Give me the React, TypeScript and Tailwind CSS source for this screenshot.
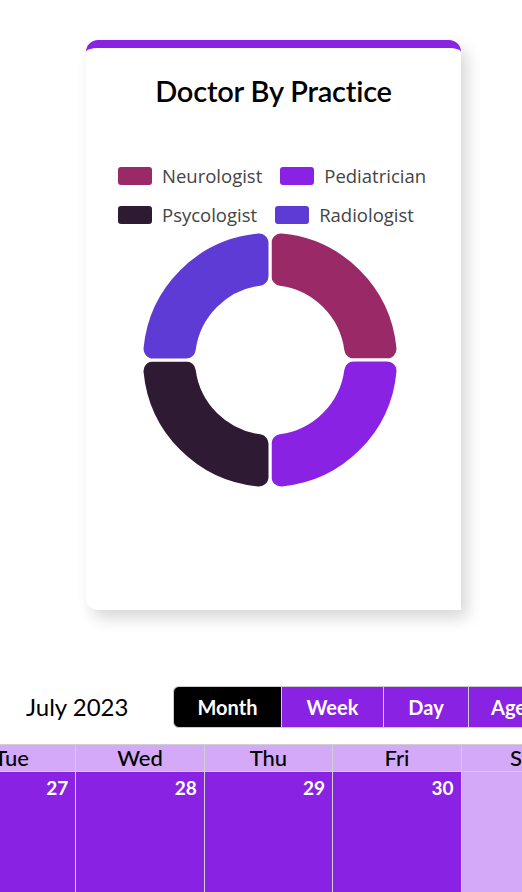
import React from "react";

const slices = [
  { label: "Neurologist", color: "#992a67", start: -90 },
  { label: "Pediatrician", color: "#8a22e4", start: 0 },
  { label: "Psycologist", color: "#2f1a34", start: 90 },
  { label: "Radiologist", color: "#5e3bd5", start: 180 },
];

const legendRows = [
  [slices[0], slices[1]],
  [slices[2], slices[3]],
];

function pt(cx: number, cy: number, rad: number, deg: number) {
  const a = (deg * Math.PI) / 180;
  return `${(cx + rad * Math.cos(a)).toFixed(2)} ${(cy + rad * Math.sin(a)).toFixed(2)}`;
}

// annular sector with rounded corners, like chart.js borderRadius
function roundedArc(cx: number, cy: number, R: number, r: number, a0: number, a1: number, k: number) {
  const to = (Math.asin(k / (R - k)) * 180) / Math.PI;
  const ti = (Math.asin(k / (r + k)) * 180) / Math.PI;
  const dOut = (R - k) * Math.cos((to * Math.PI) / 180);
  const dIn = (r + k) * Math.cos((ti * Math.PI) / 180);
  return [
    `M ${pt(cx, cy, R, a0 + to)}`,
    `A ${R} ${R} 0 0 1 ${pt(cx, cy, R, a1 - to)}`,
    `A ${k} ${k} 0 0 1 ${pt(cx, cy, dOut, a1)}`,
    `L ${pt(cx, cy, dIn, a1)}`,
    `A ${k} ${k} 0 0 1 ${pt(cx, cy, r, a1 - ti)}`,
    `A ${r} ${r} 0 0 0 ${pt(cx, cy, r, a0 + ti)}`,
    `A ${k} ${k} 0 0 1 ${pt(cx, cy, dIn, a0)}`,
    `L ${pt(cx, cy, dOut, a0)}`,
    `A ${k} ${k} 0 0 1 ${pt(cx, cy, R, a0 + to)}`,
    "Z",
  ].join(" ");
}

function Donut() {
  return (
    <svg width="260" height="260" viewBox="0 0 260 260">
      {slices.map((s) => (
        <path
          key={s.label}
          d={roundedArc(130, 130, 128.5, 73.5, s.start, s.start + 90, 11)}
          fill={s.color}
          stroke="#ffffff"
          strokeWidth={3}
        />
      ))}
    </svg>
  );
}

const days = [
  { name: "Sun", n: 25 },
  { name: "Mon", n: 26 },
  { name: "Tue", n: 27 },
  { name: "Wed", n: 28 },
  { name: "Thu", n: 29 },
  { name: "Fri", n: 30 },
  { name: "Sat", n: 1 },
];

export default function App() {
  return (
    <div className="w-[522px] h-[892px] overflow-hidden bg-white font-['Lato',sans-serif]">
      <div className="pt-[40px] pl-[86px]">
        <div className="w-[375px] h-[570px] bg-white border-t-8 border-[#8a22e4] rounded-xl rounded-br-none shadow-[6px_8px_16px_rgba(0,0,0,0.16)] flex flex-col">
          <h2 className="mt-[21px] text-center text-[29px] font-semibold text-black tracking-[-0.2px]">Doctor By Practice</h2>
          <div className="mt-[52px] pl-[32px] flex flex-col gap-[17px] font-['Open_Sans',sans-serif] text-[18.5px] text-[#444] leading-[22px]">
            {legendRows.map((row, i) => (
              <div key={i} className="flex items-center gap-[18px]">
                {row.map((s) => (
                  <div key={s.label} className="flex items-center gap-[10px]">
                    <span className="w-[34px] h-[18px] rounded-[3px]" style={{ backgroundColor: s.color }} />
                    <span>{s.label}</span>
                  </div>
                ))}
              </div>
            ))}
          </div>
          <div className="mt-[4px] flex justify-center -translate-x-[4px]">
            <Donut />
          </div>
        </div>
      </div>

      <div className="mt-[76px] flex items-center h-[42px]">
        <div className="w-[173px] shrink-0 whitespace-nowrap pl-[26px] text-[24px] text-black">July 2023</div>
        <div className="flex shrink-0 h-[42px] text-white font-bold text-[20px]">
          <button className="w-[109px] bg-black rounded-l-md border border-[#ccc]">Month</button>
          <button className="w-[102px] bg-[#8a22e4] border border-l-0 border-[#ccc]">Week</button>
          <button className="w-[85px] bg-[#8a22e4] border border-l-0 border-[#ccc]">Day</button>
          <button className="w-[110px] bg-[#8a22e4] border border-l-0 border-[#ccc] text-left pl-[22px]">Agenda</button>
        </div>
      </div>

      <div className="mt-[16px] ml-[-309px] w-[899px] border-t border-[#d0d0d0]">
        <div className="grid grid-cols-7 bg-[#d4aaf8] border-b border-[#d0d0d0]">
          {days.map((d) => (
            <div key={d.name} className="h-[26px] border-r border-[#d0d0d0] text-center text-[22px] leading-[26px] text-black font-medium">
              {d.name}
            </div>
          ))}
        </div>
        <div className="grid grid-cols-7">
          {days.map((d, i) => (
            <div
              key={d.name}
              className={
                i < 6
                  ? "h-[140px] border-r border-[#d0d0d0] bg-[#8a22e4] text-right pr-[7px] pt-[2px] text-[19px] font-bold text-white"
                  : "h-[140px] border-r border-[#d0d0d0] bg-[#d4aaf8] text-right pr-[7px] pt-[2px] text-[19px] font-bold text-white"
              }
            >
              {d.n}
            </div>
          ))}
        </div>
      </div>
    </div>
  );
}
